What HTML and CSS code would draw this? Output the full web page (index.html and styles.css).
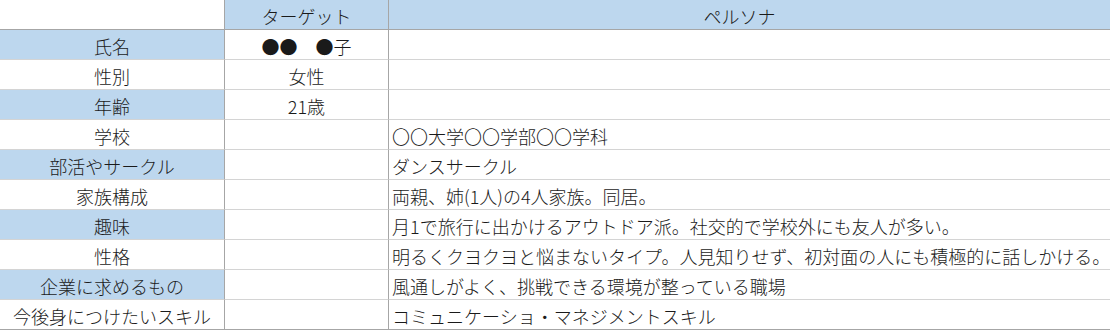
FILE: index.html
```html
<!DOCTYPE html>
<html lang="ja">
<head>
<meta charset="utf-8">
<link rel="stylesheet" href="styles.css">
</head>
<body>
<div class="sheet">
  <div class="cell head blank"></div>
  <div class="cell head c2">ターゲット</div>
  <div class="cell head c3 center">ペルソナ</div>

  <div class="cell label blue">氏名</div>
  <div class="cell c2">●●　●子</div>
  <div class="cell c3"></div>

  <div class="cell label">性別</div>
  <div class="cell c2">女性</div>
  <div class="cell c3"></div>

  <div class="cell label blue">年齢</div>
  <div class="cell c2">21歳</div>
  <div class="cell c3"></div>

  <div class="cell label">学校</div>
  <div class="cell c2"></div>
  <div class="cell c3">〇〇大学〇〇学部〇〇学科</div>

  <div class="cell label blue">部活やサークル</div>
  <div class="cell c2"></div>
  <div class="cell c3">ダンスサークル</div>

  <div class="cell label">家族構成</div>
  <div class="cell c2"></div>
  <div class="cell c3">両親、姉(1人)の4人家族。同居。</div>

  <div class="cell label blue">趣味</div>
  <div class="cell c2"></div>
  <div class="cell c3">月1で旅行に出かけるアウトドア派。社交的で学校外にも友人が多い。</div>

  <div class="cell label">性格</div>
  <div class="cell c2"></div>
  <div class="cell c3">明るくクヨクヨと悩まないタイプ。人見知りせず、初対面の人にも積極的に話しかける。</div>

  <div class="cell label blue">企業に求めるもの</div>
  <div class="cell c2"></div>
  <div class="cell c3">風通しがよく、挑戦できる環境が整っている職場</div>

  <div class="cell label last">今後身につけたいスキル</div>
  <div class="cell c2 last"></div>
  <div class="cell c3 last">コミュニケーショ・マネジメントスキル</div>
</div>
</body>
</html>
```

FILE: styles.css
```css
html, body {
  margin: 0;
  padding: 0;
  background: #ffffff;
}

.sheet {
  display: grid;
  grid-template-columns: 225px 164px 721px;
  grid-auto-rows: 30px;
  width: 1110px;
  font-family: "Noto Sans CJK JP", "Noto Sans", sans-serif;
  font-size: 18px;
  font-weight: 300;
  color: #1a1a1a;
}

.cell {
  box-sizing: border-box;
  border-bottom: 1px solid #d4d4d4;
  display: flex;
  align-items: center;
  padding-top: 2px;
  white-space: nowrap;
  line-height: 1;
}

.label {
  justify-content: center;
  border-right: 1px solid #a6a6a6;
}

.c2 {
  justify-content: center;
  border-right: 1px solid #a6a6a6;
}

.c3 {
  padding-left: 3px;
}

.c3.center {
  justify-content: center;
  padding-left: 0;
  padding-right: 20px;
}

.head {
  background: #bdd7ee;
  border-bottom: 1px solid #a6a6a6;
}

.head.blank {
  background: #ffffff;
  border-right: 1px solid #a6a6a6;
}

.blue {
  background: #bdd7ee;
}

.last {
  border-bottom: 1px solid #a6a6a6;
}
```
